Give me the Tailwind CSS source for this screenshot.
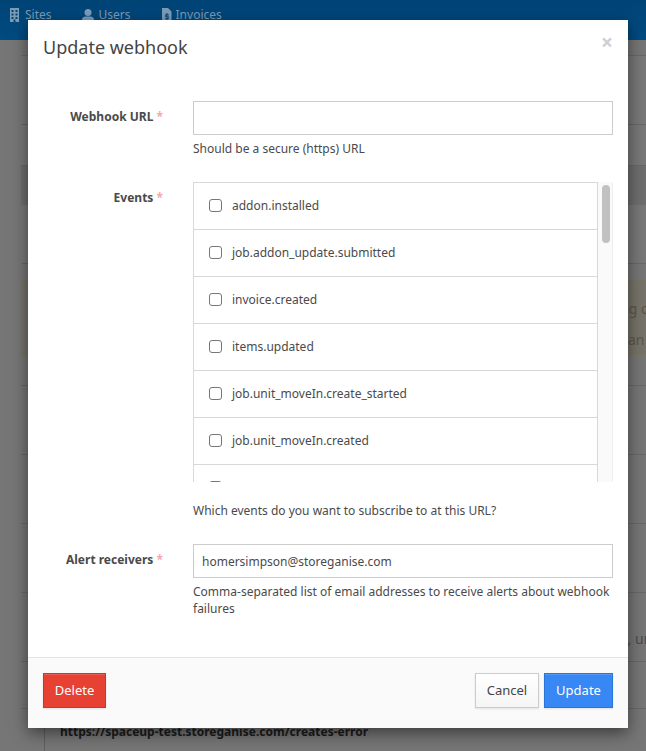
<!doctype html>
<html lang="en">
<head>
<meta charset="utf-8">
<title>Update webhook</title>
<script src="https://cdn.jsdelivr.net/npm/@tailwindcss/browser@4"></script>
</head>
<body class="font-['Noto_Sans','Open_Sans',sans-serif] bg-[#767676]">
<div class="relative h-[751px] w-[646px] overflow-hidden bg-[#767676]">
  <!-- page behind the backdrop -->
  <header class="flex h-10 items-start gap-[30px] bg-gradient-to-b from-[#004476] to-[#004b82] pl-[9px] pt-[7px] text-[12px] leading-4 text-[#7c9cb6]">
    <span class="flex items-center gap-[5px]"><svg class="h-[14px] w-[11px]" viewBox="0 0 11 14" fill="#7c9cb6"><path d="M1 0h9v14H6.500v-2.500h-2V14H1zM2.500 2v2h2V2zm4 0v2h2V2zm-4 3.500v2h2v-2zm4 0v2h2v-2zm-4 3.500v2h2V9zm4 0v2h2V9z" fill-rule="evenodd"/></svg>Sites</span>
    <span class="flex items-center gap-[5px]"><svg class="h-[13px] w-[12px]" viewBox="0 0 12 13" fill="#7c9cb6"><circle cx="6" cy="3.500" r="3.500"/><path d="M0 13V10.500C0 8.500 2 7.500 3.500 7.500h5c1.500 0 3.500 1 3.500 3V13z"/></svg>Users</span>
    <span class="flex items-center gap-[4px]"><svg class="h-[14px] w-[11px]" viewBox="0 0 11 14" fill="#7c9cb6"><path d="M1 0h6l3.500 3.500V14H1zM5.500 5v1.200H4.300v3h2v.8H4.300v1.200h1.200V12.500h1v-1.300h1.200v-3h-2v-.8h2V6.200H6.500V5z" fill-rule="evenodd"/></svg>Invoices</span>
  </header>
  <div class="flex flex-col pl-[21px] text-[12px] leading-4 text-[#4a4a4a]">
    <div class="h-[16px] border-b border-[#686868]"></div>
    <div class="h-[69px] border-b border-[#686868] bg-[#787878]"></div>
    <div class="h-[41px] border-b border-[#686868] bg-[#787878]"></div>
    <div class="h-[39px] bg-[#6e6e6e]"></div>
    <div class="h-[59px] border-b border-[#686868] bg-[#787878]"></div>
    <div class="h-[16px]"></div>
    <div class="h-[75px] border-y border-[#7a7462] bg-[#76736a] pl-[599px] pt-[12px] whitespace-nowrap text-[#5f5542]">
      <p class="text-[14px] leading-[31px]">ng on</p>
      <p class="ml-[8px] text-[14px] leading-[31px]">an </p>
    </div>
    <div class="h-[31px] border-b border-[#686868]"></div>
    <div class="h-[69px] border-b border-[#686868]"></div>
    <div class="h-[69px] border-b border-[#686868]"></div>
    <div class="h-[69px] border-b border-[#686868]"></div>
    <div class="h-[69px] border-b border-[#686868] pl-[603px] pt-[38px] whitespace-nowrap text-[14px] text-[#4a4a4a]">l, un</div>
    <div class="h-[47px] border-b border-[#686868]"></div>
    <div class="ml-[23px] h-[42px] border-l border-[#5f5f5f] pl-[15px] pt-[15px] text-[12px] font-bold whitespace-nowrap text-[#1c1c1c]">https://spaceup-test.storeganise.com/creates-error</div>
  </div>

  <!-- modal -->
  <div role="dialog" class="absolute left-[28px] top-5 flex h-[708px] w-[600px] flex-col bg-white text-[#4a4a4a] shadow-[0_5px_15px_rgba(0,0,0,0.5)]">
    <div class="flex h-[56px] shrink-0 items-start justify-between pl-[15px] pr-[15px] pt-[14px]">
      <h1 class="text-[18px] leading-[26px] text-[#444]">Update webhook</h1>
      <span class="mt-[-2px] text-[21px] leading-[21px] font-bold text-[#cfcfcf]">×</span>
    </div>
    <form class="flex flex-1 flex-col gap-0 pl-[15px] pr-[15px] pt-[25px] text-[12px] leading-[17px]">
      <div class="flex">
        <label class="w-[150px] shrink-0 pr-[30px] pt-[7px] text-right font-bold whitespace-nowrap">Webhook URL <span class="font-bold text-[#f5a9a9]">*</span></label>
        <div class="flex-1">
          <input type="text" class="block h-[34px] w-full border border-[#cccccc] bg-white px-2 text-[12px] outline-none">
          <p class="mt-[5px]">Should be a secure (https) URL</p>
        </div>
      </div>
      <div class="mt-[25px] flex">
        <label class="w-[150px] shrink-0 pr-[30px] pt-[7px] text-right font-bold whitespace-nowrap">Events <span class="font-bold text-[#f5a9a9]">*</span></label>
        <div class="flex-1">
          <div class="flex h-[300px] overflow-hidden">
            <ul class="flex-1 border-x border-t border-[#d8d8d8]">
              <li class="flex h-[47px] shrink-0 items-center gap-[10px] border-b border-[#d8d8d8] pb-[2px] pl-[15px]"><input type="checkbox" class="h-[13px] w-[13px] appearance-none rounded-[3px] border border-[#767676] bg-white"><span>addon.installed</span></li>
              <li class="flex h-[47px] shrink-0 items-center gap-[10px] border-b border-[#d8d8d8] pb-[2px] pl-[15px]"><input type="checkbox" class="h-[13px] w-[13px] appearance-none rounded-[3px] border border-[#767676] bg-white"><span>job.addon_update.submitted</span></li>
              <li class="flex h-[47px] shrink-0 items-center gap-[10px] border-b border-[#d8d8d8] pb-[2px] pl-[15px]"><input type="checkbox" class="h-[13px] w-[13px] appearance-none rounded-[3px] border border-[#767676] bg-white"><span>invoice.created</span></li>
              <li class="flex h-[47px] shrink-0 items-center gap-[10px] border-b border-[#d8d8d8] pb-[2px] pl-[15px]"><input type="checkbox" class="h-[13px] w-[13px] appearance-none rounded-[3px] border border-[#767676] bg-white"><span>items.updated</span></li>
              <li class="flex h-[47px] shrink-0 items-center gap-[10px] border-b border-[#d8d8d8] pb-[2px] pl-[15px]"><input type="checkbox" class="h-[13px] w-[13px] appearance-none rounded-[3px] border border-[#767676] bg-white"><span>job.unit_moveIn.create_started</span></li>
              <li class="flex h-[47px] shrink-0 items-center gap-[10px] border-b border-[#d8d8d8] pb-[2px] pl-[15px]"><input type="checkbox" class="h-[13px] w-[13px] appearance-none rounded-[3px] border border-[#767676] bg-white"><span>job.unit_moveIn.created</span></li>
              <li class="flex h-[47px] shrink-0 items-center gap-[10px] border-b border-[#d8d8d8] pb-[2px] pl-[15px]"><input type="checkbox" class="h-[13px] w-[13px] appearance-none rounded-[3px] border border-[#767676] bg-white"><span></span></li>
            </ul>
            <div class="w-[15px] shrink-0 border-r border-[#efefef] bg-[#fafafa] pl-[4px] pt-[3px]">
              <div class="h-[58px] w-[8px] rounded-[4px] bg-[#c1c1c1]"></div>
            </div>
          </div>
          <p class="mt-[20px]">Which events do you want to subscribe to at this URL?</p>
        </div>
      </div>
      <div class="mt-[25px] flex">
        <label class="w-[150px] shrink-0 pr-[30px] pt-[7px] text-right font-bold whitespace-nowrap">Alert receivers <span class="font-bold text-[#f5a9a9]">*</span></label>
        <div class="flex-1">
          <input type="text" value="homersimpson@storeganise.com" class="block h-[34px] w-full border border-[#cccccc] bg-white px-2 text-[12px] text-[#4a4a4a] outline-none">
          <p class="mt-[5px]">Comma-separated list of email addresses to receive alerts about webhook failures</p>
        </div>
      </div>
    </form>
    <footer class="flex h-[71px] shrink-0 items-start justify-between border-t border-[#e5e5e5] bg-[#fafafa] px-[15px] pt-[15px] text-[13px]">
      <button type="button" class="h-[35px] w-[63px] border border-[#c9372c] bg-[#e74134] text-white shadow-[0_1px_2px_rgba(0,0,0,0.1),inset_0_1px_0_rgba(255,255,255,0.15)]">Delete</button>
      <div class="flex gap-[5px]">
        <button type="button" class="h-[35px] w-[64px] border border-[#cccccc] bg-gradient-to-b from-white to-[#f5f5f5] text-[#444] shadow-[0_1px_2px_rgba(0,0,0,0.1)]">Cancel</button>
        <button type="button" class="h-[35px] w-[69px] border border-[#2a75d6] bg-[#3787f5] text-white shadow-[0_1px_2px_rgba(0,0,0,0.1),inset_0_1px_0_rgba(255,255,255,0.15)]">Update</button>
      </div>
    </footer>
  </div>
</div>
</body>
</html>
